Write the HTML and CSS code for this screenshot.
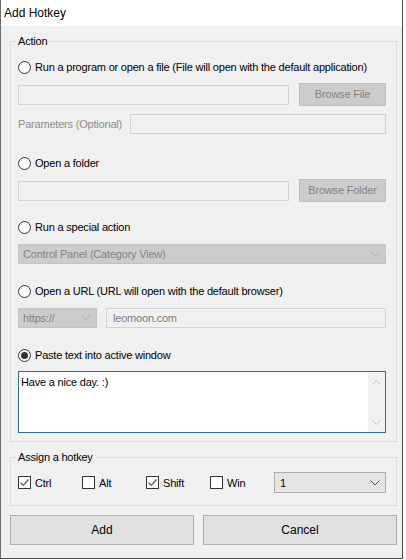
FILE: index.html
```html
<!DOCTYPE html>
<html>
<head>
<meta charset="utf-8">
<link rel="stylesheet" href="styles.css">
</head>
<body>
<div class="window">
  <div class="titlebar">Add Hotkey</div>
  <div class="client">
    <fieldset class="group action">
      <legend>Action</legend>
      <div class="choice first"><span class="radio"></span><span>Run a program or open a file (File will open with the default application)</span></div>
      <div class="path-row gap8"><div class="textbox"></div><div class="btn-off">Browse File</div></div>
      <div class="param-row gap8"><span class="label-off">Parameters (Optional)</span><div class="textbox"></div></div>
      <div class="choice gap22"><span class="radio"></span><span>Open a folder</span></div>
      <div class="path-row gap8"><div class="textbox"></div><div class="btn-off">Browse Folder</div></div>
      <div class="choice gap18"><span class="radio"></span><span>Run a special action</span></div>
      <div class="combo-off gap9"><span>Control Panel (Category View)</span><svg class="chev" width="10" height="6" viewBox="0 0 10 6"><path d="M0.5 0.5 L5 5 L9.5 0.5" fill="none" stroke="#b0b0b0" stroke-width="1"/></svg></div>
      <div class="choice gap20"><span class="radio"></span><span>Open a URL (URL will open with the default browser)</span></div>
      <div class="url-row gap9">
        <div class="combo-off"><span>https://</span><svg class="chev" width="10" height="6" viewBox="0 0 10 6"><path d="M0.5 0.5 L5 5 L9.5 0.5" fill="none" stroke="#b0b0b0" stroke-width="1"/></svg></div>
        <div class="textbox url-text">leomoon.com</div>
      </div>
      <div class="choice gap20"><span class="radio checked"></span><span>Paste text into active window</span></div>
      <div class="memo gap8">
        <div class="memo-text">Have a nice day. :)</div>
        <div class="memo-scroll">
          <svg width="9" height="5" viewBox="0 0 9 5"><path d="M0.5 4.5 L4.5 0.5 L8.5 4.5" fill="none" stroke="#c4c4c4" stroke-width="1"/></svg>
          <svg width="9" height="5" viewBox="0 0 9 5"><path d="M0.5 0.5 L4.5 4.5 L8.5 0.5" fill="none" stroke="#c4c4c4" stroke-width="1"/></svg>
        </div>
      </div>
    </fieldset>

    <fieldset class="group hotkey">
      <legend>Assign a hotkey</legend>
      <div class="key-row">
        <div class="check-item"><span class="check on"><svg width="11" height="11" viewBox="0 0 11 11"><path d="M1.5 5.5 L4.2 8.3 L9.5 2.5" fill="none" stroke="#5a5a5a" stroke-width="1.2"/></svg></span><span>Ctrl</span></div>
        <div class="check-item"><span class="check"></span><span>Alt</span></div>
        <div class="check-item"><span class="check on"><svg width="11" height="11" viewBox="0 0 11 11"><path d="M1.5 5.5 L4.2 8.3 L9.5 2.5" fill="none" stroke="#5a5a5a" stroke-width="1.2"/></svg></span><span>Shift</span></div>
        <div class="check-item"><span class="check"></span><span>Win</span></div>
        <div class="combo"><span>1</span><svg class="chev" width="10" height="6" viewBox="0 0 10 6"><path d="M0.5 0.5 L5 5 L9.5 0.5" fill="none" stroke="#555" stroke-width="1"/></svg></div>
      </div>
    </fieldset>

    <div class="buttons">
      <div class="btn">Add</div>
      <div class="btn">Cancel</div>
    </div>
  </div>
</div>
</body>
</html>
```

FILE: styles.css
```css
* { box-sizing: border-box; }
html, body { margin: 0; padding: 0; background: #ffffff; }
body {
  font-family: "Liberation Sans", Arial, sans-serif;
  font-size: 11px;
  letter-spacing: -0.2px;
  color: #000;
}
.window {
  width: 403px;
  height: 559px;
  border-left: 1px solid #6b6b6b;
  border-right: 1px solid #4a4a4a;
  border-bottom: 1px solid #4a4a4a;
  background: #f0f0f0;
  display: flex;
  flex-direction: column;
}
.titlebar {
  height: 26px;
  background: #ffffff;
  padding-left: 3px;
  line-height: 26px;
  font-size: 12px;
  letter-spacing: 0;
  color: #000;
}
.client {
  padding: 8px 5px 0 9px;
}
.group {
  margin: 0;
  border: 1px solid #dcdcdc;
  padding: 0 10px 0 7px;
  min-width: 0;
}
.group legend {
  padding: 0 2px;
  margin-left: -2px;
  line-height: 15px;
}
.action { padding-top: 11px; padding-bottom: 8px; }
.hotkey { margin-top: 8px; padding-top: 7px; padding-bottom: 12px; }

.gap8 { margin-top: 8px; }
.gap9 { margin-top: 9px; }
.gap18 { margin-top: 18px; }
.gap20 { margin-top: 20px; }
.gap22 { margin-top: 22px; }

.choice {
  height: 15px;
  display: flex;
  align-items: center;
  gap: 4px;
  line-height: 15px;
}
.radio {
  width: 13px;
  height: 13px;
  border: 1px solid #333;
  border-radius: 50%;
  background: #fff;
  flex: none;
  display: flex;
  align-items: center;
  justify-content: center;
}
.radio.checked::after {
  content: "";
  width: 7px;
  height: 7px;
  border-radius: 50%;
  background: #333;
}
.textbox {
  height: 20px;
  border: 1px solid #d2d2d2;
  background: #f0f0f0;
  color: #6d6d6d;
  padding-left: 5px;
  line-height: 18px;
}
.path-row {
  display: grid;
  grid-template-columns: 1fr 87px;
  column-gap: 10px;
  align-items: center;
  height: 23px;
}
.btn-off {
  height: 23px;
  background: #cccccc;
  border: 1px solid #c0c0c0;
  color: #838383;
  text-align: center;
  line-height: 21px;
}
.param-row {
  display: grid;
  grid-template-columns: 112px 1fr;
  align-items: center;
  height: 20px;
}
.label-off { color: #8c8c8c; }
.combo-off {
  height: 20px;
  background: #cccccc;
  border: 1px solid #c4c4c4;
  color: #838383;
  display: flex;
  align-items: center;
  justify-content: space-between;
  padding: 0 5px 0 4px;
}
.url-row {
  display: grid;
  grid-template-columns: 79px 1fr;
  column-gap: 9px;
}
.url-text { color: #7a7a7a; padding-left: 6px; }
.memo {
  height: 62px;
  border: 1px solid #2a6f8f;
  background: #fff;
  display: flex;
}
.memo-text {
  flex: 1;
  padding: 3px 2px;
  line-height: 15px;
}
.memo-scroll {
  width: 17px;
  background: #f0f0f0;
  display: flex;
  flex-direction: column;
  justify-content: space-between;
  align-items: center;
  padding: 8px 0 7px;
}
.key-row {
  display: grid;
  grid-template-columns: 64px 64px 64px 64px 1fr;
  align-items: center;
  height: 21px;
}
.check-item {
  display: flex;
  align-items: center;
  gap: 4px;
}
.check {
  width: 13px;
  height: 13px;
  border: 1px solid #333;
  background: #fff;
  flex: none;
  display: flex;
  align-items: center;
  justify-content: center;
}
.combo {
  height: 21px;
  background: #e5e5e5;
  border: 1px solid #adadad;
  display: flex;
  align-items: center;
  justify-content: space-between;
  padding: 0 5px 0 5px;
}
.buttons {
  margin-top: 9px;
  display: grid;
  grid-template-columns: 184px 1fr;
  column-gap: 9px;
}
.btn {
  height: 30px;
  background: #e1e1e1;
  border: 1px solid #adadad;
  text-align: center;
  line-height: 28px;
  font-size: 12px;
  letter-spacing: 0;
}
```
